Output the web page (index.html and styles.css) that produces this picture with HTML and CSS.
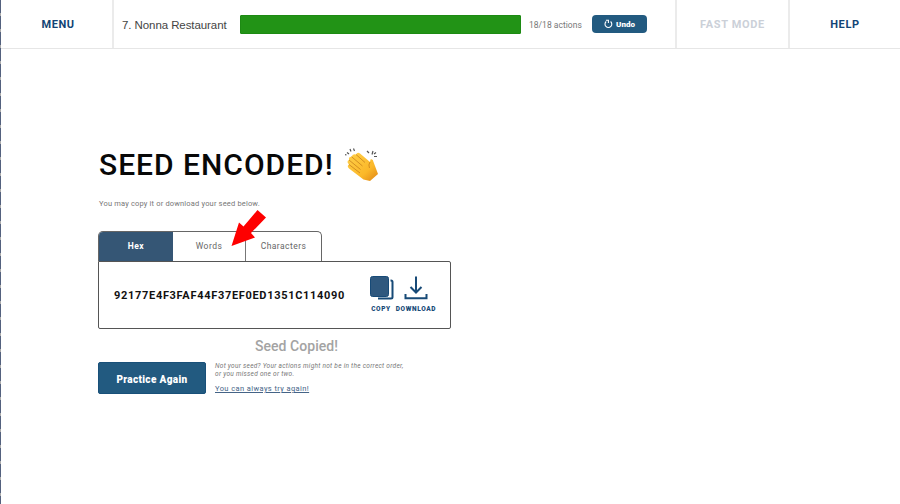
FILE: index.html
```html
<!DOCTYPE html>
<html lang="en">
<head>
<meta charset="utf-8">
<title>Seed Encoded</title>
<link rel="stylesheet" href="styles.css">
</head>
<body>
<header class="topbar">
  <div class="cell menu"><span>MENU</span></div>
  <div class="progress">
    <span class="place">7. Nonna Restaurant</span>
    <div class="bar"></div>
    <span class="actions">18/18 actions</span>
    <button class="undo"><svg width="9" height="10" viewBox="0 0 9 10"><path d="M2.2 2.5A3.4 3.4 0 1 0 6.6 2.5M4.400 4V1.300H1.900" fill="none" stroke="#fff" stroke-width="1.1"/></svg><span>Undo</span></button>
  </div>
  <div class="cell fast"><span>FAST MODE</span></div>
  <div class="cell help"><span>HELP</span></div>
</header>
<main class="content">
  <div class="title">
    <h1>SEED ENCODED!</h1>
    <svg class="clap" width="34" height="34" viewBox="0 0 34 34">
      <defs><linearGradient id="skin" x1="0" y1="0" x2="1" y2="1"><stop offset="0" stop-color="#ffd04a"/><stop offset=".65" stop-color="#fbb829"/><stop offset="1" stop-color="#df8415"/></linearGradient></defs>
      <path d="M11 6.500Q12.500 3.500 15 5.500L25 14L25.500 11.500Q28 10.500 28.500 14L31.500 22L33 26L25 33L18.500 31.500L4 20.500Q1.500 18 4 16.500Q1 13.500 4 12Q3.500 8.500 6.500 8.700Q8 5.500 11 6.500Z" fill="url(#skin)"/>
      <path d="M11 6.500L20 14.500M6.500 8.700L17.500 18M4 12L15.500 21.500M4 16.500L15 25M25 14Q23 17 24.500 20" fill="none" stroke="#c9821c" stroke-width=".8"/>
      <path d="M2 4.500L4 6M5 1L6 3.500M8.500 .5L9.500 3M0 6.500L1.500 7M22 3L24 5M28 3L27 6.500M31 4.500L29 6M29 8.500H32" fill="none" stroke="#555" stroke-width="1.200"/>
    </svg>
  </div>
  <p class="intro">You may copy it or download your seed below.</p>
  <div class="tabs">
    <div class="tab active"><span>Hex</span></div>
    <div class="tab words"><span>Words</span></div>
    <div class="tab chars"><span>Characters</span></div>
    <svg class="pointer" width="36" height="37" viewBox="0 0 36 37"><path d="M26.500 0L35 7.500L20 23L24 27.500L.5 36L8 12.500L12.500 16.500Z" fill="#fe0000"/></svg>
  </div>
  <section class="seed">
    <span class="code">92177E4F3FAF44F37EF0ED1351C114090</span>
    <div class="tool copy">
      <svg width="24" height="25" viewBox="0 0 24 25"><rect x=".5" y=".5" width="18" height="20" rx="2" fill="#2f587e" stroke="#174a77"/><path d="M20.500 4.500H21Q22.500 4.500 22.500 6V21Q22.500 22.500 21 22.500H8" fill="none" stroke="#174a77" stroke-width="2"/></svg>
      <span>COPY</span>
    </div>
    <div class="tool download">
      <svg width="24" height="25" viewBox="0 0 24 25"><path d="M12 .5V16M6.500 11L12 16.500L17.500 11M1.500 18V22.200H22.500V18" fill="none" stroke="#174a77" stroke-width="2"/></svg>
      <span>DOWNLOAD</span>
    </div>
  </section>
  <div class="copied"><span>Seed Copied!</span></div>
  <div class="footer">
    <button class="practice"><span>Practice Again</span></button>
    <div class="notes">
      <p>Not your seed? Your actions might not be in the correct order,<br>or you missed one or two.</p>
      <a>You can always try again!</a>
    </div>
  </div>
</main>
</body>
</html>
```
FILE: styles.css
```css
* { box-sizing: border-box; }
body {
  margin: 0;
  height: 504px;
  overflow: hidden;
  display: grid;
  grid-template: 49px 1fr / 1fr;
  padding-left: 1px;
  background: repeating-linear-gradient(#53617e 0 13px, #aaa 13px 16px) 0 0 / 1px 100% no-repeat #fff;
  font-family: Roboto, "Liberation Sans", sans-serif;
}
button { border: 0; padding: 0; font-family: inherit; color: #fff; background: #225a80; white-space: nowrap; }
span, a { white-space: nowrap; }
h1, p { margin: 0; }
.topbar { display: flex; height: 49px; border-bottom: 1px solid #e6e6e6; }
.cell { display: flex; align-items: center; justify-content: center; font-weight: 700; font-size: 11px; color: #124475; }
.menu { width: 113px; padding-left: 3px; border-right: 2px solid #ebebeb; }
.menu span { letter-spacing: .5px; }
.progress { flex: 1; display: flex; align-items: center; padding-left: 8px; }
.place { width: 118px; padding-top: 1px; font: 11.500px "Liberation Sans", sans-serif; color: #444; letter-spacing: -.08px; }
.bar { width: 281px; height: 19px; background: #229316; border: 1px solid #1d8a13; border-radius: 1px; }
.actions { width: 71px; padding: 1px 0 0 8px; font-size: 8.500px; letter-spacing: .02px; color: #777; }
.undo { display: flex; align-items: center; justify-content: center; gap: 3px; width: 55px; height: 18px; border-radius: 4px; font-size: 8px; font-weight: 900; }
.fast { width: 115px; border-left: 2px solid #ebebeb; border-right: 2px solid #ebebeb; color: #cbd0d8; letter-spacing: .65px; }
.fast span { font-size: 11px; }
.help { width: 110px; font-size: 11px; letter-spacing: .65px; }
.content { padding: 98px 0 0 97px; }
.title { display: flex; align-items: flex-start; height: 36px; padding-left: 1px; }
h1 { width: 246px; font-size: 30px; line-height: 36px; font-weight: 500; letter-spacing: 1px; color: #080808; white-space: nowrap; }
.clap { margin-top: 1px; }
.intro { margin: 16px 0 0 1px; height: 32px; line-height: 10px; font-size: 7.500px; letter-spacing: .17px; color: #777; }
.tabs { position: relative; display: flex; width: 224px; height: 30px; border: 1px solid #666; border-bottom: 0; border-radius: 5px 5px 0 0; }
.tab { display: flex; align-items: center; justify-content: center; padding-bottom: 1px; font-size: 8.500px; letter-spacing: .45px; color: #666; }
.active { width: 74px; background: #355675; color: #fff; font-weight: 700; border-radius: 4px 0 0 0; }
.words { width: 73px; border-right: 1px solid #777; }
.chars { flex: 1; }
.pointer { position: absolute; left: 132px; top: -22px; }
.seed { display: flex; width: 353px; height: 68px; border: 1px solid #555; border-radius: 0 2px 2px 2px; }
.code { width: 271px; padding-left: 15px; font-size: 11px; line-height: 68px; font-weight: 700; letter-spacing: .69px; color: #111; }
.tool { display: flex; flex-direction: column; align-items: center; padding-top: 14px; font-size: 6.500px; font-weight: 900; color: #174a77; }
.tool svg { display: block; }
.tool span { margin-top: 4px; line-height: 8px; letter-spacing: .65px; }
.copy { width: 22px; }
.copy svg { margin-left: 2px; }
.download { width: 48px; }
.copied { height: 33px; padding: 8px 0 0 157px; line-height: 18px; font-size: 14px; font-weight: 500; letter-spacing: .05px; color: #a3a3a3; }
.footer { display: flex; }
.practice { width: 108px; height: 32px; border-radius: 2px; border: 1px solid #195079; font-size: 10px; font-weight: 900; letter-spacing: .35px; }
.practice span { display: block; padding-top: 2px; }
.notes { padding-left: 9px; color: #777; }
.notes p { font-size: 6.500px; line-height: 8px; font-style: italic; letter-spacing: .28px; }
.notes a { display: block; width: max-content; margin-top: 6px; font-size: 7.500px; line-height: 10px; color: #456487; text-decoration: underline; letter-spacing: .4px; }
```
